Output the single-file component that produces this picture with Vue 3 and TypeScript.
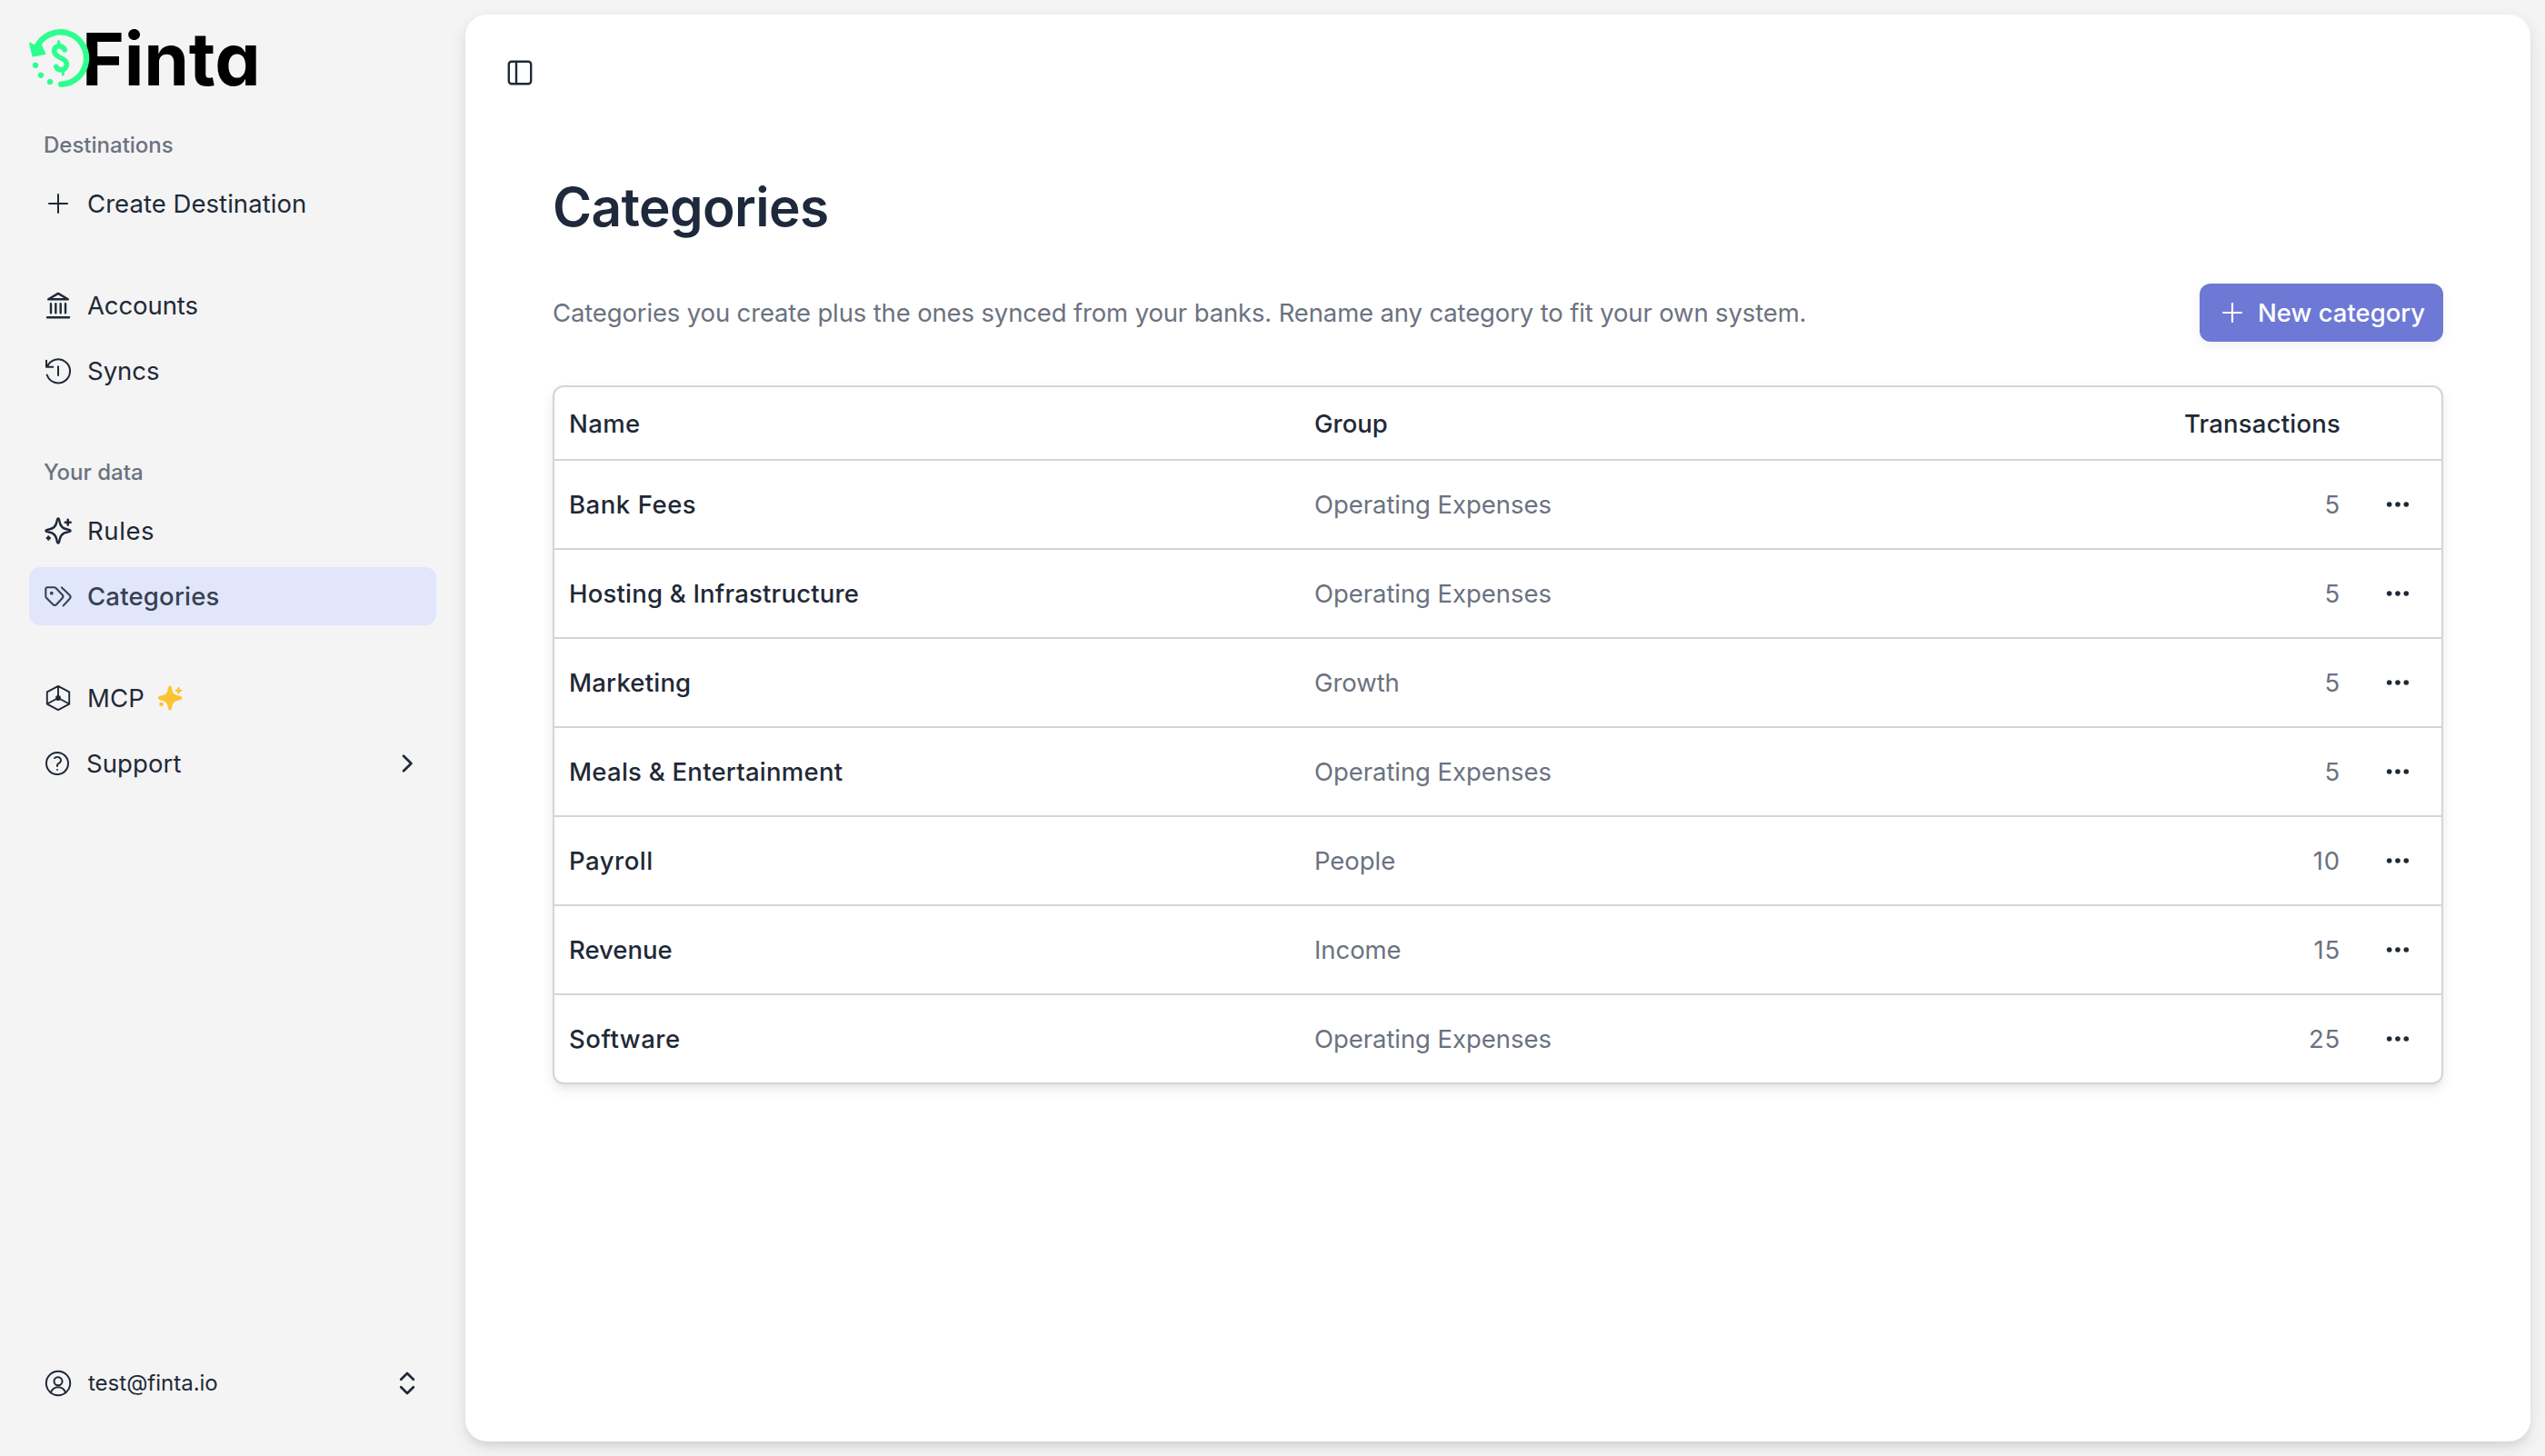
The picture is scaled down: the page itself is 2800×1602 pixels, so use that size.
<script setup lang="ts">
interface Category {
  name: string
  group: string
  count: number
  tracking: number
}

const categories: Category[] = [
  { name: 'Bank Fees', group: 'Operating Expenses', count: 5, tracking: 0.55 },
  { name: 'Hosting & Infrastructure', group: 'Operating Expenses', count: 5, tracking: 0.2 },
  { name: 'Marketing', group: 'Growth', count: 5, tracking: 0.2 },
  { name: 'Meals & Entertainment', group: 'Operating Expenses', count: 5, tracking: 0.25 },
  { name: 'Payroll', group: 'People', count: 10, tracking: 0.5 },
  { name: 'Revenue', group: 'Income', count: 15, tracking: 0 },
  { name: 'Software', group: 'Operating Expenses', count: 25, tracking: 0.55 },
]
</script>

<template>
  <div class="app">
    <aside class="sidebar">
      <div class="logo">
        <svg class="logo-mark" width="68" height="66" viewBox="31 31 68 66">
          <path d="M40.5 51.5A28.7 28.7 0 1 1 67.2 92.7" stroke-width="6.4" />
          <path class="solid" d="M33 47.6l5.2 2.9 6-2 5.3 10.6-13.2 2.3z" stroke-width="2" />
          <circle class="solid" cx="39" cy="71.8" r="2.8" />
          <circle class="solid" cx="45" cy="82.7" r="2.8" />
          <circle class="solid" cx="55" cy="90" r="2.8" />
          <path d="M71.2 54.8C69.4 50.2 62.4 49.2 60 53.8c-1.8 4.6 1.6 7.2 6 9.4 4.8 2.2 8.6 4.4 7 9.6-2 5.6-9.4 5-11.2.6" stroke-width="5.6" />
          <path d="M64.6 45.6v4M69.3 78v4" stroke-width="3" />
        </svg>
        <span class="logo-text">Finta</span>
      </div>

      <nav class="nav">
        <div class="group">
          <div class="label">Destinations</div>
          <a class="item">
            <svg class="icon" viewBox="0 0 24 24" stroke-width="1.5"><path d="M12 4.5v15m7.5-7.5h-15" /></svg>
            <span class="t-create">Create Destination</span>
          </a>
        </div>

        <div class="group">
          <a class="item">
            <svg class="icon" viewBox="0 0 32 32" stroke-width="2.4">
              <path d="M16 2.9L5.2 9.3h21.6zM8 14.2v10M13.300 14.200v10M18.700 14.200v10M24 14.200v10M4 29.300h24" />
            </svg>
            <span class="t-accounts">Accounts</span>
          </a>
          <a class="item">
            <svg class="icon" viewBox="0 0 32 32" stroke-width="2">
              <path d="M3 4.800v6.900h7.300M4 11.500A13 13 0 1 1 3.700 20.500M16 11.300v9.700" />
            </svg>
            <span>Syncs</span>
          </a>
        </div>

        <div class="group">
          <div class="label">Your data</div>
          <a class="item">
            <svg class="icon" viewBox="0 0 32 32" stroke-width="2.4">
              <path d="M16 2.500c1 0 1.200 1.300 1.500 3.300.8 5.400 3.200 7.900 8.700 8.700 2 .3 3.300.5 3.300 1.500s-1.300 1.200-3.300 1.500c-5.500.8-7.900 3.300-8.700 8.700-.3 2-.5 3.300-1.500 3.300s-1.200-1.300-1.500-3.300c-.8-5.400-3.200-7.900-8.700-8.700-2-.3-3.300-.5-3.300-1.500s1.300-1.200 3.300-1.500c5.500-.8 7.900-3.300 8.700-8.700.3-2 .5-3.300 1.500-3.300z" />
              <path d="M26.700 3.800v5.800M23.800 6.700h5.800M5.300 22.600v2.800M3.900 24h2.800" stroke-width="2.600" />
            </svg>
            <span class="t-rules">Rules</span>
          </a>
          <a class="item active">
            <svg class="icon" viewBox="0 0 32 32" stroke-width="2.1">
              <path d="M4.200 6.200h7.300c.8 0 1.400.3 2 .9l6.900 7.200c1.200 1.200 1.200 2.800.1 4l-6.300 6.600c-1.200 1.300-2.800 1.300-4 .1l-7-7.100c-.6-.6-.9-1.200-.9-2V7.900c0-1 .7-1.700 1.900-1.700z" />
              <path d="M19.900 6.400l8.700 8.400c1.300 1.300 1.300 2.700.1 4l-7 7.600" />
              <circle class="dot" cx="8.800" cy="12.700" r="1.900" />
            </svg>
            <span class="t-categories">Categories</span>
          </a>
        </div>

        <div class="group">
          <a class="item">
            <svg class="icon" viewBox="0 0 32 32" stroke-width="1.9">
              <path d="M16 2.800L28.200 9.400v13.200L16 29.200 3.800 22.600V9.400zM16 3v13L3.800 22.500M16 16l12.200 6.500" />
              <circle class="dot" cx="16" cy="16" r="2.900" />
            </svg>
            <span class="t-mcp">MCP</span>
            <svg class="spark" width="28" height="28" viewBox="0 0 28 28">
              <path class="dot" d="M14 .5c1.300 0 1.800 1.300 2.100 3 .9 5.300 2.500 7.200 7.900 8.100 1.900.3 3.200 1 3.200 2.400s-1.300 2.100-3.200 2.400c-5.400.9-7 2.800-7.900 8.100-.3 1.700-.8 3-2.100 3s-1.800-1.300-2.100-3c-.9-5.300-2.500-7.200-7.900-8.100C2.100 16.100.8 15.400.8 14s1.300-2.100 3.200-2.400c5.400-.9 7-2.800 7.900-8.100.3-1.700.8-3 2.100-3z" />
              <path d="M23.400 3.200v5M20.900 5.700h5" stroke-width="2.400" />
              <circle class="dot" cx="4.500" cy="21" r="2.300" />
            </svg>
          </a>
          <a class="item support">
            <svg class="icon" viewBox="0 0 24 24" stroke-width="1.5">
              <path d="M9.879 7.519c1.171-1.025 3.071-1.025 4.242 0 1.172 1.025 1.172 2.687 0 3.712-.203.179-.43.326-.67.442-.745.361-1.450.999-1.450 1.827v.75M21 12a9 9 0 1 1-18 0 9 9 0 0 1 18 0Zm-9 5.250h.008v.008H12v-.008Z" />
            </svg>
            <span class="t-support">Support</span>
            <svg class="trail" width="32" height="32" viewBox="0 0 32 32" stroke-width="2.7"><path d="M12 7.800l8.400 8.200-8.400 8.200" /></svg>
          </a>
        </div>
      </nav>

      <div class="user">
        <svg class="icon" viewBox="0 0 32 32" stroke-width="2">
          <circle cx="16" cy="16" r="13.200" />
          <circle cx="16" cy="13.800" r="4.500" />
          <path d="M7.800 26.200c1.600-3.900 4.500-6 8.200-6s6.600 2.100 8.200 6" />
        </svg>
        <span>test@finta.io</span>
        <svg class="trail" width="32" height="32" viewBox="0 0 32 32" stroke-width="2.7"><path d="M9.200 11.800L16 5l6.800 6.800M9.200 20.200L16 27l6.800-6.800" /></svg>
      </div>
    </aside>

    <main class="main">
      <header class="topbar">
        <svg width="32" height="32" viewBox="0 0 32 32" stroke-width="2.4">
          <rect x="3.800" y="3.800" width="24.400" height="24.400" rx="3" />
          <path d="M12 4v24" />
        </svg>
      </header>

      <section class="content">
        <h1>Categories</h1>
        <div class="intro">
          <p>Categories you create plus the ones synced from your banks. Rename any category to fit your own system.</p>
          <button type="button" class="new">
            <svg class="icon" viewBox="0 0 24 24" stroke-width="1.6"><path d="M12 4.500v15m7.500-7.500h-15" /></svg>
            <span>New category</span>
          </button>
        </div>

        <div class="card">
          <div class="row head">
            <span class="t-name">Name</span>
            <span>Group</span>
            <span class="num t-trans">Transactions</span>
          </div>
          <div v-for="c in categories" :key="c.name" class="row">
            <span class="name" :style="{ letterSpacing: c.tracking + 'px' }">{{ c.name }}</span>
            <span class="muted">{{ c.group }}</span>
            <span class="muted num count">{{ c.count }}</span>
            <svg class="dots" width="28" height="28" viewBox="0 0 28 28">
              <circle cx="4.700" cy="14" r="2.800" /><circle cx="14" cy="14" r="2.800" /><circle cx="23.300" cy="14" r="2.800" />
            </svg>
          </div>
        </div>
      </section>
    </main>
  </div>
</template>

<style>
body {
  background: #f4f4f4;
}
</style>

<style scoped>
* {
  box-sizing: border-box;
}
.app {
  display: flex;
  height: 1602px;
  overflow: hidden;
  font-family: 'Inter', 'Liberation Sans', sans-serif;
  font-size: 27.5px;
  line-height: 40px;
  color: #1f2937;
  background: #f4f4f4;
}
svg {
  display: block;
  flex: none;
  fill: none;
  stroke: currentColor;
  stroke-linecap: round;
  stroke-linejoin: round;
}
.icon {
  width: 32px;
  height: 32px;
}
.dot {
  fill: currentColor;
  stroke: none;
}

/* Sidebar */
.sidebar {
  width: 512px;
  flex: none;
  display: flex;
  flex-direction: column;
  padding: 0 32px 32px;
}
.logo {
  display: flex;
  height: 128px;
  align-items: flex-start;
  padding-top: 31px;
  margin-left: -1px;
}
.logo-mark {
  position: relative;
  z-index: 1;
  color: #2cff8f;
}
.solid {
  fill: currentColor;
}
.logo-text {
  margin-left: -9px;
  font-size: 80px;
  font-weight: 700;
  line-height: 68px;
  letter-spacing: -0.2px;
  font-feature-settings: 'cv11';
  color: #000;
}
.nav {
  display: flex;
  flex-direction: column;
  gap: 48px;
}
.group {
  display: flex;
  flex-direction: column;
  gap: 8px;
}
.label {
  height: 64px;
  margin-bottom: -8px;
  padding-left: 16px;
  font-size: 24px;
  font-weight: 500;
  line-height: 64px;
  color: #6b7280;
}
.item {
  display: flex;
  align-items: center;
  gap: 16px;
  height: 64px;
  padding: 0 16px;
  border-radius: 12px;
}
.item.active {
  background: #e1e6fd;
  color: #374151;
  font-weight: 500;
}
.item.support {
  padding-left: 15px;
}
.trail {
  margin-left: auto;
}
.spark {
  margin-left: -2px;
  color: #fdc431;
}
.t-create {
  letter-spacing: 0.05px;
}
.t-accounts {
  letter-spacing: -0.1px;
}
.t-rules {
  letter-spacing: 0.6px;
}
.t-categories {
  letter-spacing: 0.2px;
}
.t-mcp {
  letter-spacing: 0.1px;
}
.t-support {
  letter-spacing: 0.1px;
}
.user {
  display: flex;
  align-items: center;
  gap: 17px;
  height: 96px;
  margin-top: auto;
  padding: 0 16px;
  font-size: 24px;
}

/* Main panel */
.main {
  flex: 1;
  margin: 16px 16px 16px 0;
  border-radius: 24px;
  background: #fff;
  box-shadow: 0 6px 18px rgba(0, 0, 0, 0.1), 0 6px 10px -4px rgba(0, 0, 0, 0.08);
}
.topbar {
  display: flex;
  align-items: center;
  height: 128px;
  padding-left: 44px;
}
.content {
  padding: 48px 96px 0;
}
h1 {
  margin: 0;
  font-size: 58.5px;
  font-weight: 600;
  line-height: 72px;
  letter-spacing: -0.6px;
  color: #1e293b;
}
.intro {
  display: flex;
  align-items: center;
  justify-content: space-between;
  margin-top: 48px;
}
.intro p {
  margin: 0;
  letter-spacing: -0.145px;
  color: #6b7280;
}
.new {
  display: flex;
  align-items: center;
  gap: 12px;
  width: 268px;
  height: 64px;
  padding: 0 0 0 20px;
  border: 0;
  border-radius: 12px;
  background: #6e79d6;
  color: #fff;
  font: inherit;
  font-weight: 500;
  white-space: nowrap;
  box-shadow: 0 4px 12px rgba(0, 0, 0, 0.06);
}
.card {
  margin-top: 48px;
  border: 2px solid #d1d5db;
  border-radius: 12px;
  background: #fff;
  box-shadow: 0 6px 14px rgba(0, 0, 0, 0.08), 0 4px 6px -2px rgba(0, 0, 0, 0.05);
}
.row {
  display: grid;
  grid-template-columns: 820px 820px 309px 1fr;
  align-items: center;
  height: 98px;
  padding-left: 16px;
  border-bottom: 2px solid #d1d5db;
}
.row:last-child {
  height: 96px;
  border-bottom: 0;
}
.head {
  height: 81px;
  font-weight: 500;
}
.name {
  font-weight: 500;
}
.muted {
  color: #6b7280;
  letter-spacing: -0.06px;
}
.num {
  text-align: right;
}
.count {
  letter-spacing: 0.8px;
}
.t-name {
  letter-spacing: 0.4px;
}
.t-trans {
  letter-spacing: 0.2px;
}
.dots {
  margin-left: 49px;
  fill: #1f2937;
  stroke: none;
}
</style>
